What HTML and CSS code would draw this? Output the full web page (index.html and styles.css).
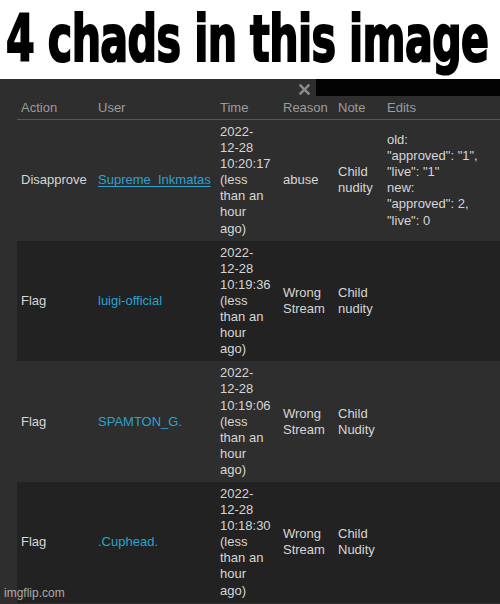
FILE: index.html
```html
<!DOCTYPE html>
<html>
<head>
<meta charset="utf-8">
<link rel="stylesheet" href="styles.css">
</head>
<body>
<div class="page">
  <header class="meme-title"><span class="meme-text">4 chads in this image</span></header>
  <section class="panel">
    <div class="topbar">
      <div class="topbar-left">
        <svg class="close" width="13" height="13" viewBox="0 0 12 12"><path d="M1.5 1.5 L10.5 10.5 M10.5 1.5 L1.5 10.5" stroke="#8a8a8a" stroke-width="2.4" stroke-linecap="butt"/></svg>
      </div>
      <div class="topbar-right"></div>
    </div>
    <table class="log">
      <colgroup>
        <col class="c-action"><col class="c-user"><col class="c-time"><col class="c-reason"><col class="c-note"><col class="c-edits">
      </colgroup>
      <thead>
        <tr><th>Action</th><th>User</th><th>Time</th><th>Reason</th><th>Note</th><th>Edits</th></tr>
      </thead>
      <tbody>
        <tr class="light">
          <td>Disapprove</td>
          <td><a class="user u-line">Supreme_Inkmatas</a></td>
          <td>2022-<br>12-28<br>10:20:17<br>(less<br>than an<br>hour<br>ago)</td>
          <td>abuse</td>
          <td>Child<br>nudity</td>
          <td>old:<br>"approved": "1",<br>"live": "1"<br>new:<br>"approved": 2,<br>"live": 0</td>
        </tr>
        <tr class="dark">
          <td>Flag</td>
          <td><a class="user">luigi-official</a></td>
          <td>2022-<br>12-28<br>10:19:36<br>(less<br>than an<br>hour<br>ago)</td>
          <td>Wrong<br>Stream</td>
          <td>Child<br>nudity</td>
          <td></td>
        </tr>
        <tr class="light">
          <td>Flag</td>
          <td><a class="user">SPAMTON_G.</a></td>
          <td>2022-<br>12-28<br>10:19:06<br>(less<br>than an<br>hour<br>ago)</td>
          <td>Wrong<br>Stream</td>
          <td>Child<br>Nudity</td>
          <td></td>
        </tr>
        <tr class="dark">
          <td>Flag</td>
          <td><a class="user">.Cuphead.</a></td>
          <td>2022-<br>12-28<br>10:18:30<br>(less<br>than an<br>hour<br>ago)</td>
          <td>Wrong<br>Stream</td>
          <td>Child<br>Nudity</td>
          <td></td>
        </tr>
      </tbody>
    </table>
    <div class="watermark">imgflip.com</div>
  </section>
</div>
</body>
</html>
```

FILE: styles.css
```css
html, body {
  margin: 0;
  padding: 0;
  background: #ffffff;
}
.page {
  width: 500px;
  height: 604px;
  overflow: hidden;
  position: relative;
}
.meme-title {
  height: 79px;
  background: #ffffff;
  overflow: hidden;
}
.meme-text {
  display: inline-block;
  font-family: "DejaVu Sans", sans-serif;
  font-weight: bold;
  font-size: 64px;
  line-height: 79px;
  color: #000;
  -webkit-text-stroke: 2.2px #000;
  letter-spacing: -1px;
  white-space: nowrap;
  transform: scaleX(0.645);
  transform-origin: 0 0;
  margin-left: 6px;
  margin-top: 0;
}
.panel {
  background: #2e2e2e;
  height: 525px;
  position: relative;
  font-family: "Liberation Sans", Arial, sans-serif;
  font-size: 13px;
}
.topbar {
  display: flex;
  height: 17px;
}
.topbar-left {
  width: 316px;
  display: flex;
  justify-content: flex-end;
  align-items: center;
  padding-right: 5px;
  box-sizing: border-box;
}
.close {
  display: block;
  margin-top: 3px;
}
.topbar-right {
  flex: 1;
  background: #030303;
}
.log {
  margin-left: 17px;
  width: 483px;
  border-collapse: collapse;
  table-layout: fixed;
}
.c-action { width: 77px; }
.c-user { width: 122px; }
.c-time { width: 63px; }
.c-reason { width: 55px; }
.c-note { width: 49px; }
.c-edits { width: 117px; }
.log th {
  text-align: left;
  font-weight: normal;
  color: #9c9c9c;
  height: 23px;
  padding: 0 4px;
  vertical-align: middle;
  border-bottom: 1.5px solid #575757;
  line-height: 16px;
}
.log td {
  color: #d6d6d6;
  padding: 4px 4px;
  line-height: 16.1px;
  vertical-align: middle;
  white-space: nowrap;
}
.log tr.light { background: #2e2e2e; }
.log tr.dark { background: #222222; }
.user {
  color: #2ba2cf;
  text-decoration: none;
}
.u-line {
  text-decoration: underline;
  text-underline-offset: 2px;
}
.watermark {
  position: absolute;
  left: 4px;
  bottom: 4px;
  font-family: "Liberation Sans", Arial, sans-serif;
  font-size: 12px;
  color: rgba(255,255,255,0.62);
}
```
